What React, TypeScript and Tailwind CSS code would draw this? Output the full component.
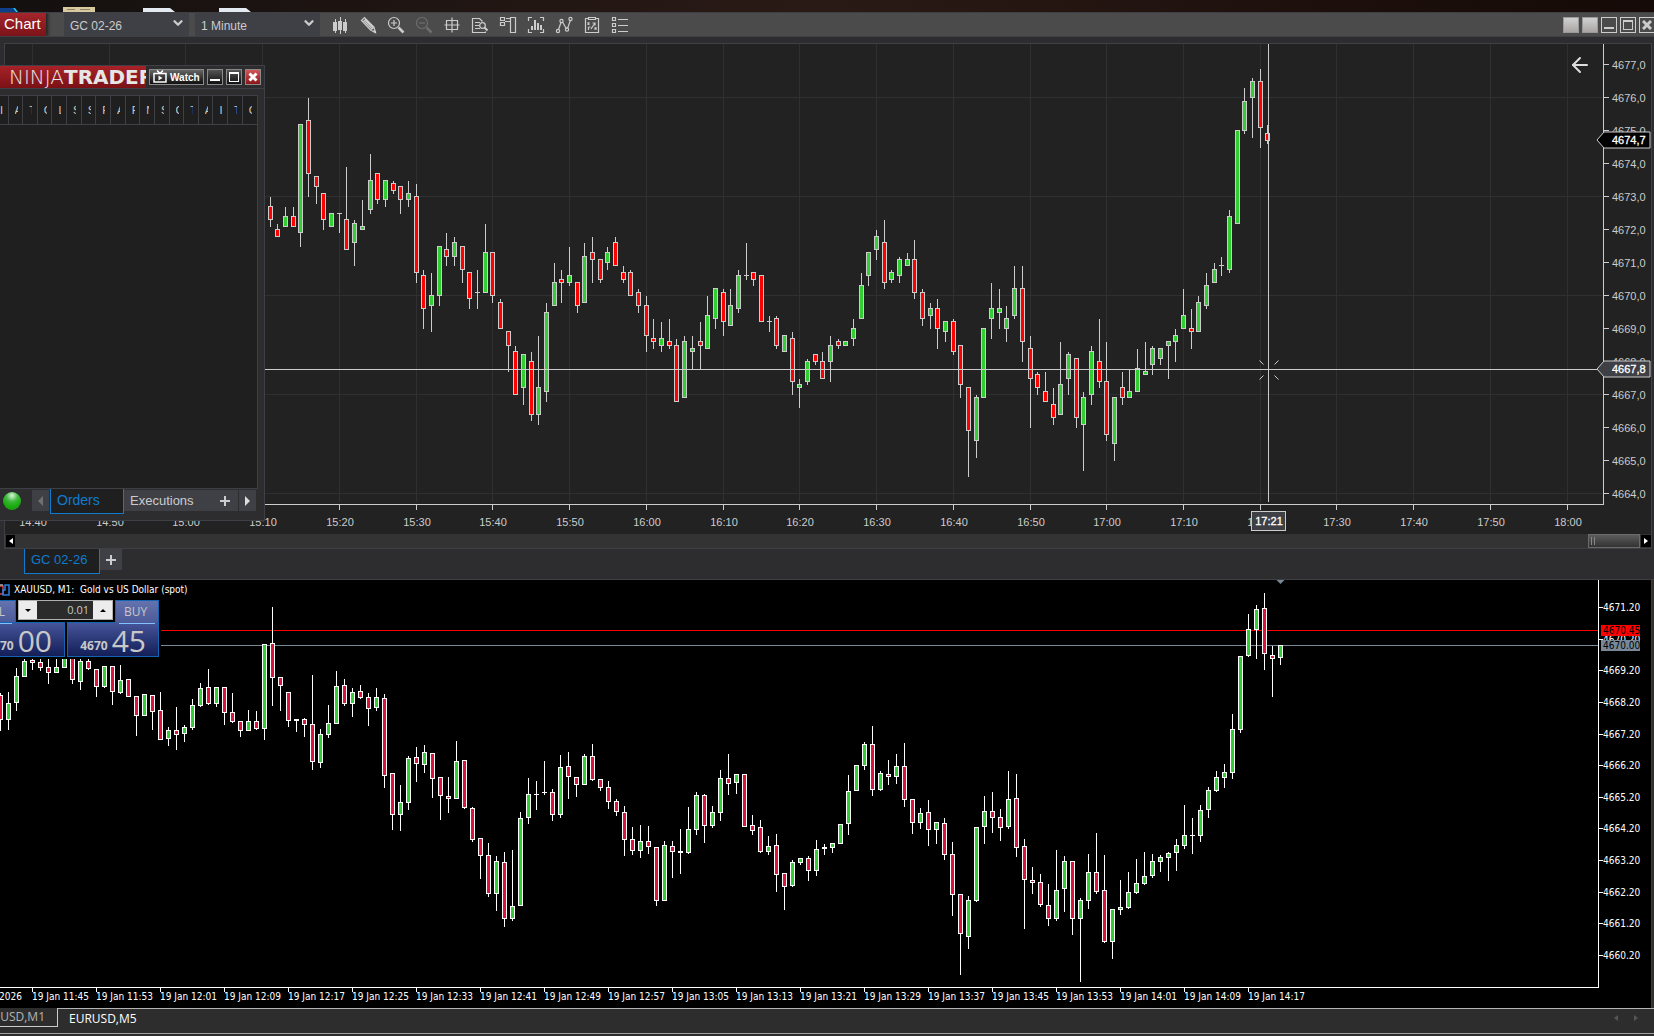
import React from "react";
import { ArrowLeft, ChevronDown } from "lucide-react";

type Tone = "up" | "down" | "flat";
/* x centre, high, body top, body bottom, low; g = rising, r = falling, d = doji */
type Segment = { x: number; y: number; bars: string };

/* Bars are recorded on a grid of thirds of a pixel, relative to the segment origin. */
const GRID = 3;

const FUTURES: Segment[] = [
  {
    x: 255,
    y: 90,
    bars: `46,321,348,390,411,r 67,402,417,441,441,r 91,351,378,411,411,g 115,351,378,411,411,r 136,102,102,429,471,g 160,24,90,252,321,r 184,258,258,291,342,r 205,309,309,390,420,r 229,369,369,411,411,g 253,369,369,372,429,d 274,231,387,480,480,r 298,390,399,459,528,g 322,330,408,420,420,g 346,192,270,360,372,g 367,249,249,330,342,r 391,270,270,330,351,g 415,273,279,303,312,r 436,288,288,330,372,r 460,273,309,330,351,g 484,282,318,549,579,r 505,540,555,657,717,r 529,549,615,648,726,g 553,468,468,618,648,g 574,429,477,501,528,r 598,441,456,501,528,g 622,468,468,540,579,r 643,546,546,627,657,r 667,540,606,609,657,d 691,402,486,609,609,g 712,486,486,618,639,r 736,627,636,717,717,r 760,723,723,768,846,r 781,768,783,915,915,r 805,792,792,894,945,g 829,786,813,975,993,r 850,738,891,975,1005,g 874,639,666,906,936,g 898,519,576,648,648,g 919,540,567,579,639,r 943,471,555,579,588,g 967,576,576,648,669,r 988,459,498,639,639,g 1012,441,486,510,579,r 1036,507,507,570,579,r 1057,471,486,519,540,g 1081,441,456,528,528,r 1105,528,546,570,579,r 1126,540,546,618,618,r 1150,597,606,648,669,r 1174,618,645,738,786,r 1195,687,744,756,777,r 1219,696,744,768,786,g 1243,687,753,768,777,r`,
  },
  {
    x: 655,
    y: 200,
    bars: `64,417,435,606,606,r 88,408,423,594,594,g 112,408,444,456,507,g 136,366,423,438,507,r 157,288,345,447,447,g 181,264,264,357,387,g 205,267,276,366,408,r 226,267,315,378,378,g 250,210,225,327,339,g 274,129,225,228,240,d 295,216,216,240,258,r 319,225,225,366,366,r 343,348,363,366,396,d 364,348,354,438,447,r 388,405,405,456,456,g 412,396,414,546,585,r 433,537,552,564,624,g 457,477,483,546,555,g 481,462,462,486,495,r 502,456,483,537,537,r 526,408,435,486,546,g 550,417,423,438,447,r 571,423,423,438,438,g 595,357,384,417,438,g 619,219,255,357,357,g 640,156,156,228,258,g 664,90,108,150,180,g 688,60,126,249,267,r 709,210,216,240,249,g 733,171,177,228,249,g 757,159,177,198,198,g 778,120,177,279,297,r 802,267,276,357,378,r 826,309,324,348,387,g 847,297,324,387,447,r 871,363,363,396,426,g 895,357,363,456,465,r 916,435,435,555,594,r 940,561,561,693,831,r 964,585,591,723,774,g 985,384,384,594,594,g 1009,249,324,357,417,g 1033,267,324,339,387,g 1054,318,354,387,426,g 1078,198,264,348,357,g 1102,198,264,426,486,r 1126,408,444,537,684,r 1147,516,522,564,585,r 1171,516,573,606,606,r 1195,564,612,654,675,r 1216,426,552,645,645,g 1240,456,462,537,585,g`,
  },
  {
    x: 1040,
    y: 50,
    bars: `109,924,924,1104,1134,r 130,1026,1041,1125,1263,g 154,888,903,1035,1065,g 178,807,933,996,1014,r 199,876,993,1155,1173,r 223,1041,1041,1182,1233,g 247,966,1011,1044,1065,r 268,960,1023,1044,1044,g 292,897,954,1026,1026,g 316,876,963,975,975,g 337,888,894,945,975,g 361,894,894,927,945,g 385,873,873,888,987,g 406,837,855,876,936,g 430,717,795,837,837,g 454,777,834,846,897,r 475,738,756,846,846,g 499,669,705,768,777,g 523,639,657,699,699,g 544,621,645,648,678,d 568,480,498,660,669,g 592,240,240,522,522,g 613,114,153,243,252,g 637,84,93,144,264,g 661,57,93,234,294,r 682,225,249,273,282,r`,
  },
];

const SPOT: Segment[] = [
  {
    x: 0,
    y: 590,
    bars: `1,309,315,390,423,r 25,306,339,390,420,g 49,234,258,339,363,g 73,180,213,261,261,g 97,180,210,219,240,r 121,180,216,234,243,r 145,180,231,249,282,r 169,180,231,249,249,g 193,150,150,234,234,g 217,150,150,270,282,r 241,150,213,276,300,g 265,150,213,237,240,r 289,237,237,291,321,r 313,228,228,291,294,g 337,228,228,306,345,r 361,225,270,309,312,g 385,267,267,321,321,r 409,318,318,378,438,r 433,312,312,378,378,g 457,315,315,366,420,r 481,306,360,450,450,r 505,411,420,447,468,g 529,351,420,435,480,r 553,405,411,432,456,g 577,327,345,414,420,g 601,279,294,348,351,g 625,237,291,342,345,r 649,291,291,342,351,g 673,291,291,369,405,r 697,309,366,396,399,r 721,393,393,423,441,r 745,360,393,423,423,g 769,363,393,417,420,r 793,162,162,417,450,g 817,51,159,264,348,r 841,261,261,288,363,r 865,306,306,393,411,r 889,387,387,393,426,d 913,384,387,405,441,r 937,255,402,516,540,r 961,417,432,519,534,g 985,345,399,435,444,g 1009,243,288,402,402,g 1033,267,285,342,348,r 1057,294,306,342,381,g 1081,285,303,324,327,r 1105,309,321,357,408,r 1129,294,321,354,363,g 1153,312,324,558,594,r 1177,549,549,675,720,r 1201,585,636,675,723,g 1225,498,504,639,660,g 1249,471,501,522,576,r 1273,465,486,525,549,g 1297,489,489,567,624,r 1321,561,561,618,690,r 1345,561,618,627,669,r 1369,453,513,627,627,g 1393,510,510,654,657,r 1417,651,654,750,756,r`,
  },
  {
    x: 480,
    y: 720,
    bars: `1,354,354,408,477,r 25,369,405,522,531,r 49,408,423,522,573,g 73,396,426,597,621,r 97,390,558,597,603,g 121,276,294,558,558,g 145,174,222,294,312,g 169,183,222,225,270,d 193,123,216,219,225,d 217,207,216,285,303,r 241,105,141,285,294,g 265,96,138,171,237,r 289,171,171,195,231,r 313,102,108,195,195,g 337,72,108,180,183,r 361,177,177,204,213,r 385,183,201,246,267,r 409,237,243,276,288,r 433,258,276,360,408,r 457,321,357,393,405,r 481,315,363,393,414,g 505,318,363,381,402,r 529,381,381,543,558,r 553,363,375,543,543,g 577,363,378,396,474,r 601,327,393,399,462,d 625,261,327,399,402,g 649,216,225,330,345,g 673,222,225,318,369,r 697,258,276,318,324,g 721,150,174,279,303,g 745,102,174,192,225,r 769,162,162,189,222,g 793,162,162,321,321,r 817,285,315,333,345,r 841,300,321,396,399,r 865,348,378,396,405,g 889,342,375,465,516,r 913,459,459,501,570,r 937,420,426,498,501,g 961,414,414,429,435,g 985,408,414,453,483,r 1009,360,387,453,468,g 1033,372,381,387,405,d 1057,369,369,384,399,g 1081,312,312,372,372,g 1105,165,213,312,345,g 1129,135,135,213,213,g 1153,66,72,138,150,g 1177,18,72,210,228,r 1201,153,159,210,213,g 1225,120,162,171,195,r 1249,102,138,171,192,g 1273,69,138,240,261,r 1297,237,237,309,342,r 1321,264,279,309,327,g 1345,240,276,330,378,r 1369,306,306,330,372,g`,
  },
  {
    x: 920,
    y: 570,
    bars: `73,744,759,855,870,r 97,816,852,975,1038,r 121,972,972,1092,1215,r 145,978,990,1101,1137,g 169,771,771,993,996,g 193,678,723,771,822,g 217,666,723,744,789,r 241,717,741,774,813,r 265,603,687,771,777,g 289,612,684,834,861,r 313,807,828,930,1077,r 337,891,930,939,972,r 361,912,936,1005,1011,r 385,942,1005,1047,1068,r 409,840,960,1047,1053,g 433,858,873,957,1026,g 457,873,873,1047,1095,r 481,984,990,1047,1236,g 505,852,906,993,1017,g 529,789,906,966,972,r 553,855,960,1116,1119,r 577,1017,1017,1116,1167,g 601,930,1011,1020,1035,g 625,906,966,1014,1017,g 649,867,939,969,972,g 673,846,918,942,945,g 697,852,873,918,924,g 721,855,861,876,906,g 745,846,849,864,933,g 769,807,825,849,903,g 793,705,795,828,837,g 817,744,795,798,852,d 841,705,720,798,816,g 865,651,660,720,744,g 889,603,621,663,666,g 913,582,606,624,654,g 937,432,477,609,627,g 961,258,258,480,489,g 985,132,177,258,261,g 1009,105,117,180,267,g 1033,69,114,252,300,r 1057,228,255,267,381,r 1081,225,225,264,285,g`,
  },
];

type Bar = { x: number; high: number; top: number; bottom: number; low: number; tone: Tone };

const TONES: Record<string, Tone> = { g: "up", r: "down", d: "flat" };

function parse(segments: Segment[]): Bar[] {
  return segments.flatMap((s) =>
    s.bars.split(" ").map((item) => {
      const p = item.split(",");
      const y = (v: string) => s.y + Math.round(Number(v) / GRID);
      return {
        x: s.x + Math.floor(Number(p[0]) / GRID),
        high: y(p[1]),
        top: y(p[2]),
        bottom: y(p[3]),
        low: y(p[4]),
        tone: TONES[p[5]],
      };
    })
  );
}

const futuresBars = parse(FUTURES);
const spotBars = parse(SPOT);

function Candles({ bars, outline, up, down }: { bars: Bar[]; outline: string; up: string; down: string }) {
  return (
    <g shapeRendering="crispEdges">
      {bars.map((b) => (
        <g key={b.x}>
          <rect x={b.x} y={b.high} width={1} height={Math.max(1, b.low - b.high)} fill={outline} />
          <rect x={b.x - 2} y={b.top} width={5} height={b.bottom - b.top} fill={outline} />
          {b.tone !== "flat" && (
            <rect
              x={b.x - 1}
              y={b.top + 1}
              width={3}
              height={Math.max(1, b.bottom - b.top - 2)}
              fill={b.tone === "up" ? up : down}
            />
          )}
        </g>
      ))}
    </g>
  );
}

/* ---------- toolbar ---------- */

const toolIcons: { name: string; dim?: boolean; art: React.ReactNode }[] = [
  {
    name: "Chart style",
    art: (
      <g fill="currentColor" stroke="none">
        <path d="M2 6h4v9H2zM4 3h1v14H4zM7 5h4v9H7zM9 1h1v17H9zM12 6h4v9h-4zM14 3h1v14h-1z" />
      </g>
    ),
  },
  {
    name: "Drawing tools",
    art: (
      <>
        <path d="M2.500 4.500l3-3 9.500 9.500 1.500 5.500-5-2.500zM4 6l3-3M12 14l3-3M5 5l8 8" />
        <path d="M6 3.500l8 8M14.500 14.500l2 2" strokeWidth={2} />
      </>
    ),
  },
  {
    name: "Zoom in",
    art: (
      <>
        <circle cx={7} cy={7} r={5.500} />
        <path d="M4 7h6M7 4v6" />
        <path d="M11.500 11.500l5 5" strokeWidth={2.500} />
      </>
    ),
  },
  {
    name: "Zoom out",
    dim: true,
    art: (
      <>
        <circle cx={7} cy={7} r={5.500} />
        <path d="M4 7h6" />
        <path d="M11.500 11.500l5 5" strokeWidth={2.500} />
      </>
    ),
  },
  {
    name: "Crosshair",
    art: <path d="M3.500 4.500h11v9h-11zM9 1.500v15M1.500 9h15" />,
  },
  {
    name: "Data box",
    art: (
      <>
        <path d="M14.500 15.500v1h-13v-14h7l3 3M4 6.500h5M4 9.500h4M4 12.500h5" />
        <circle cx={11.500} cy={9.500} r={2.800} />
        <path d="M13.500 11.500l3 3" strokeWidth={2} />
      </>
    ),
  },
  {
    name: "Chart trader",
    art: <path d="M11.500 1.500h5v15h-5zM11 5.500H6M1.500 1.500h4v3h-4zM1.500 6.500h4v3h-4zM7 2.500h4" />,
  },
  {
    name: "Data series",
    art: (
      <>
        <path d="M1.500 5v-3.500H5M13 1.500h3.500V5M16.500 13v3.500H13M5 16.500H1.500V13" />
        <path d="M5 14v-4M8 14V4M11 14V7M14 14V9" strokeWidth={2} />
      </>
    ),
  },
  {
    name: "Indicators",
    art: (
      <>
        <path d="M3.500 13.500L6 6.500M7.500 6l4 7M12.500 12.500l3-8.500" />
        <circle cx={3} cy={15} r={1.600} />
        <circle cx={6.500} cy={5} r={1.600} />
        <circle cx={12} cy={13.500} r={1.600} />
        <circle cx={15.500} cy={3} r={1.600} />
      </>
    ),
  },
  {
    name: "Strategies",
    art: (
      <>
        <path d="M5 2.500H2.500v14h13v-14H13M5.500 1.500h7v2h-7z" />
        <path d="M4.500 6.500l2 2m0-2l-2 2M11.500 11.500l2 2m0-2l-2 2M5.500 11v3m0-3h2M8 13l4-6m-2.500 0H12v2.500" />
      </>
    ),
  },
  {
    name: "Properties",
    art: <path d="M1.500 1.500h3v3h-3zM1.500 7.500h3v3h-3zM1.500 13.500h3v3h-3zM7 3.500h10M7 9.500h10M7 15.500h10" />,
  },
];

function ToolbarSelect({ label, value }: { label: string; value: string }) {
  return (
    <div className="relative w-[125px] bg-[#3f3f46]">
      <select
        aria-label={label}
        className="h-[19px] w-full appearance-none bg-transparent pl-[6px] text-[12px] leading-[19px] text-[#cccccc] outline-none"
      >
        <option>{value}</option>
      </select>
      <ChevronDown className="pointer-events-none absolute right-1 top-[3px] size-[14px] text-[#cccccc]" strokeWidth={4} />
    </div>
  );
}

function Toolbar() {
  return (
    <header className="flex h-[25px] items-center overflow-hidden border-y border-[#3f3f46] bg-[#4b4b4b]">
      <h1 className="flex h-full w-[46px] items-center bg-gradient-to-b from-[#a5252b] to-[#7c1318] pl-1 text-[15px] text-white shadow-[2px_0_3px_#222]">
        Chart
      </h1>
      <div className="ml-[18px] flex gap-[6px]">
        <ToolbarSelect label="Instrument" value="GC 02-26" />
        <ToolbarSelect label="Interval" value="1 Minute" />
      </div>
      <nav className="ml-[6px] flex">
        {toolIcons.map((t) => (
          <button key={t.name} aria-label={t.name} className="flex w-7 justify-center">
            <svg
              viewBox="0 0 18 18"
              className={t.dim ? "size-[18px] text-[#6e6e6e]" : "size-[18px] text-[#cccccc]"}
              fill="none"
              stroke="currentColor"
              strokeWidth={1.200}
            >
              {t.art}
            </svg>
          </button>
        ))}
      </nav>
      <div className="ml-auto flex gap-[3px]">
        <button aria-label="Instrument link" className="size-4 border border-[#999] bg-gradient-to-b from-[#d0d0d0] to-[#aaa5a5]" />
        <button aria-label="Interval link" className="size-4 border border-[#999] bg-gradient-to-b from-[#d0d0d0] to-[#aaa5a5]" />
        <button aria-label="Minimize" className="flex size-4 items-end justify-center border border-[#cccccc] pb-[3px]">
          <span className="h-[2px] w-[10px] bg-[#cccccc]" />
        </button>
        <button aria-label="Maximize" className="flex size-4 items-center justify-center border border-[#cccccc]">
          <span className="size-[10px] border border-t-2 border-[#cccccc]" />
        </button>
        <button aria-label="Close" className="flex h-4 w-[15px] items-center justify-center border border-r-0 border-[#cccccc]">
          <svg viewBox="0 0 10 10" className="size-[10px]" stroke="#cccccc" strokeWidth={3}>
            <path d="M1 1l8 8M9 1L1 9" />
          </svg>
        </button>
      </div>
    </header>
  );
}

/* ---------- futures chart ---------- */

const GRID_X = [32, 109, 185, 262, 339, 416, 492, 569, 646, 723, 799, 876, 953, 1030, 1106, 1183, 1260, 1336, 1413, 1490, 1567];
const GRID_Y = [97, 196, 295, 394, 493];

function timeAt(index: number) {
  const minutes = 14 * 60 + 40 + index * 10;
  return `${Math.floor(minutes / 60)}:${String(minutes % 60).padStart(2, "0")}`;
}

function PriceTag({ y, text, fill }: { y: number; text: string; fill: string }) {
  return (
    <g>
      <path d={`M1597 ${y}l7-8h46v16h-46z`} fill={fill} stroke="#cccccc" />
      <text x={1612} y={y + 4} fill="#ffffff" stroke="#ffffff" strokeWidth={0.300}>
        {text}
      </text>
    </g>
  );
}

function FuturesChart() {
  return (
    <section aria-label="GC 02-26 one minute chart" className="mr-[2px] ml-1 border border-[#3f3f46] bg-[#222222]">
      <div className="flex h-[490px] text-[11px]">
        <div className="relative min-w-0 flex-1">
          <svg className="h-full w-full">
            <g transform="translate(-5 -44)">
              <g shapeRendering="crispEdges">
                {GRID_X.map((x) => (
                  <rect key={x} x={x} y={44} width={1} height={458} fill="#303032" />
                ))}
                {GRID_Y.map((y) => (
                  <rect key={y} x={5} y={y} width={1597} height={1} fill="#303032" />
                ))}
                <rect x={5} y={504} width={1599} height={1} fill="#cccccc" />
                {GRID_X.map((x) => (
                  <rect key={x} x={x} y={505} width={1} height={5} fill="#cccccc" />
                ))}
              </g>
              <Candles bars={futuresBars} outline="#cccccc" up="#32cd32" down="#ff0000" />
              <g fill="#cccccc" shapeRendering="crispEdges">
                <rect x={5} y={369} width={1592} height={1} />
                <rect x={1268} y={44} width={1} height={458} />
              </g>
              <path
                d="M1259.500 360.500l4 4M1278.500 360.500l-4 4M1259.500 379.500l4-4M1278.500 379.500l-4-4"
                stroke="#cccccc"
              />
              <g fill="#cccccc" textAnchor="middle">
                {GRID_X.map((x, i) => (
                  <text key={x} x={x + 1} y={526}>
                    {timeAt(i)}
                  </text>
                ))}
              </g>
              <rect x={1251.500} y={511.500} width={34} height={19} fill="#3f3f46" stroke="#cccccc" />
              <text x={1269} y={525} textAnchor="middle" fill="#ffffff" stroke="#ffffff" strokeWidth={0.300}>
                17:21
              </text>
            </g>
          </svg>
          <button aria-label="Scroll to last bar" className="absolute right-[11px] top-[9px] text-[#dddddd]">
            <ArrowLeft className="size-6" strokeWidth={2} />
          </button>
        </div>
        <svg className="h-full w-12 shrink-0 overflow-visible">
          <g transform="translate(-1603 -44)">
            <rect x={1603} y={44} width={1} height={461} fill="#cccccc" />
            {Array.from({ length: 14 }, (_, i) => (
              <g key={i} fill="#cccccc">
                <rect x={1604} y={64 + i * 33} width={5} height={1} />
                <text x={1612} y={69 + i * 33}>
                  {`${4677 - i},0`}
                </text>
              </g>
            ))}
            <PriceTag y={140} text="4674,7" fill="#000000" />
            <PriceTag y={369} text="4667,8" fill="#3f3f46" />
          </g>
        </svg>
      </div>
      <div className="flex h-[14px] items-center bg-[#333333]">
        <button aria-label="Scroll left" className="ml-px flex h-3 w-[9px] items-center justify-center bg-black">
          <svg viewBox="0 0 4 6" className="h-[6px] w-1" fill="#ffffff">
            <path d="M4 0v6L0 3z" />
          </svg>
        </button>
        <div className="ml-auto mr-px flex h-[14px] w-[52px] items-center gap-[2px] border border-[#6a6a6a] bg-gradient-to-b from-[#5c5c5c] to-[#333333] pl-[2px]">
          <span className="h-2 w-px bg-[#888]" />
          <span className="h-2 w-px bg-[#888]" />
        </div>
        <button aria-label="Scroll right" className="flex h-3 w-[10px] items-center justify-center bg-black">
          <svg viewBox="0 0 4 6" className="h-[6px] w-1" fill="#ffffff">
            <path d="M0 0v6l4-3z" />
          </svg>
        </button>
      </div>
    </section>
  );
}

/* ---------- control center window ---------- */

const COLUMNS = ["I", "A", "T", "C", "L", "S", "S", "F", "A", "F", "N", "S", "C", "T", "A", "I", "T", "C"];

function ControlCenter() {
  return (
    <aside className="absolute left-0 top-[65px] flex h-[456px] w-[265px] flex-col border-y border-r border-[#3f3f46] bg-[#2d2d30]">
      <div className="flex h-[23px] items-center border-b border-[#3f3f46]">
        <div className="flex h-full w-[146px] items-center overflow-hidden whitespace-nowrap bg-gradient-to-b from-[#a82228] to-[#7a1116] font-['DejaVu_Sans'] text-[20px] leading-[22px] text-[#e6e6e6]">
          <span className="-ml-1 w-[68px] shrink-0 text-right font-extralight">NINJA</span>
          <span className="font-bold">TRADER</span>
        </div>
        <div className="ml-auto flex gap-[3px] pr-[3px]">
          <button className="flex h-4 w-[55px] items-center gap-[3px] border border-[#8a8a8a] bg-gradient-to-b from-[#666] to-[#111] pl-[3px] text-[10px] font-bold text-white">
            <svg viewBox="0 0 14 14" className="size-[14px]" fill="none" stroke="#ffffff" strokeWidth={1.500}>
              <path d="M1 3.500h12v8.500H1zM4 .5l3 3 3-3" />
              <path d="M5.500 5.500v5l4-2.500z" fill="#ffffff" stroke="none" />
            </svg>
            Watch
          </button>
          <button aria-label="Minimize" className="flex size-4 items-end justify-center border border-[#8a8a8a] bg-gradient-to-b from-[#555] to-[#111] pb-[3px]">
            <span className="h-[2px] w-[10px] bg-white" />
          </button>
          <button aria-label="Maximize" className="flex size-4 items-center justify-center border border-[#8a8a8a] bg-gradient-to-b from-[#555] to-[#111]">
            <span className="size-[10px] border border-t-2 border-white" />
          </button>
          <button aria-label="Close" className="flex size-4 items-center justify-center border border-[#8a8a8a] bg-gradient-to-b from-[#d2555a] to-[#8c1318]">
            <svg viewBox="0 0 10 10" className="size-[10px]" stroke="#ffffff" strokeWidth={3}>
              <path d="M1.500 1.500l7 7M8.500 1.500l-7 7" />
            </svg>
          </button>
        </div>
      </div>
      <div className="mr-[6px] mt-[6px] flex-1 border-y border-r border-[#3f3f46] bg-[#1f1f1f]">
        <table className="w-full table-fixed border-collapse">
          <thead>
            <tr className="h-[28px] border-b border-[#3f3f46]">
              {COLUMNS.map((c, i) => (
                <th
                  key={i}
                  className="border-r border-[#3f3f46] p-0 text-[11px] font-normal text-[#cccccc] first:w-2 last:border-r-0"
                >
                  <span className={i === 0 ? "block w-[3px] overflow-hidden" : "ml-[6px] block w-[3px] overflow-hidden"}>{c}</span>
                </th>
              ))}
            </tr>
          </thead>
        </table>
      </div>
      <div className="flex h-[31px] items-start text-[13px] text-[#cccccc]">
        <span className="ml-[3px] mt-[3px] size-[18px] rounded-full bg-[radial-gradient(circle_at_50%_20%,#d8f5d8_0%,#3fb93f_35%,#1fae12_60%,#159010_100%)]" />
        <button aria-label="Previous tab" className="ml-[11px] mt-px flex h-[21px] w-[17px] items-center justify-center bg-[#3f3f46]">
          <svg viewBox="0 0 5 10" className="h-[10px] w-[5px]" fill="#707070">
            <path d="M5 0v10L0 5z" />
          </svg>
        </button>
        <button className="ml-px h-[25px] w-[74px] border border-t-0 border-[#0f7bcf] bg-[#1f1f1f] pb-px pl-[6px] text-left text-[14px] text-[#0f7bcf]">
          Orders
        </button>
        <button className="mt-px h-[21px] w-[88px] bg-[#3f3f46] pl-[6px] text-left">Executions</button>
        <button aria-label="Add tab" className="mt-px flex h-[21px] w-[26px] items-center justify-center bg-[#3f3f46]">
          <Plus />
        </button>
        <button aria-label="Next tab" className="ml-px mt-px flex h-[21px] w-[17px] items-center justify-center bg-[#3f3f46]">
          <svg viewBox="0 0 5 10" className="h-[10px] w-[5px]" fill="#dddddd">
            <path d="M0 0v10l5-5z" />
          </svg>
        </button>
      </div>
    </aside>
  );
}

function Plus() {
  return (
    <svg viewBox="0 0 10 10" className="size-[10px]" fill="#cccccc">
      <path d="M4 0h2v4h4v2H6v4H4V6H0V4h4z" />
    </svg>
  );
}

/* ---------- spot chart ---------- */

const DATES = [
  "19 Jan 2026", "19 Jan 11:45", "19 Jan 11:53", "19 Jan 12:01", "19 Jan 12:09", "19 Jan 12:17", "19 Jan 12:25",
  "19 Jan 12:33", "19 Jan 12:41", "19 Jan 12:49", "19 Jan 12:57", "19 Jan 13:05", "19 Jan 13:13", "19 Jan 13:21",
  "19 Jan 13:29", "19 Jan 13:37", "19 Jan 13:45", "19 Jan 13:53", "19 Jan 14:01", "19 Jan 14:09", "19 Jan 14:17",
];
const SPOT_PRICES = ["4671.20", "4670.20", "4669.20", "4668.20", "4667.20", "4666.20", "4665.20", "4664.20", "4663.20", "4662.20", "4661.20", "4660.20"];

function spotPriceY(i: number) {
  return 607 + Math.round((i * 348) / 11);
}

function TradePanel() {
  return (
    <div className="absolute left-0 top-[20px] flex items-start gap-[2px] bg-black pb-[2px] pr-[2px] font-['Open_Sans',sans-serif] text-[#c8c8c8]">
      <div className="w-[65px]">
        <button className="relative z-10 block h-[22px] w-4 overflow-hidden border-r border-t border-[#1464b4] bg-gradient-to-b from-[#6472ad] to-[#4d5b9a] text-[12px]">
          <span className="float-right mr-[10px]">SELL</span>
        </button>
        <div className="relative flex h-[35px] items-end justify-end overflow-hidden border-y border-r border-[#1464b4] bg-gradient-to-b from-[#46549a] to-[#141f58] pr-3">
          <span className="absolute left-0 top-0 h-px w-3 bg-[#82c0ff]" />
          <span className="mr-1 pb-[2px] text-[12px] font-bold leading-4">4670</span>
          <span className="text-[30px] leading-[30px]">00</span>
        </div>
      </div>
      <div className="absolute left-[18px] top-0 flex h-5 w-[95px] border border-[#b0b0b0] bg-[#2b2b2b]">
        <button aria-label="Decrease volume" className="flex w-[18px] items-center justify-center bg-[#ececec]">
          <svg viewBox="0 0 6 3" className="h-[3px] w-[6px]">
            <path d="M0 0h6L3 3z" />
          </svg>
        </button>
        <input aria-label="Volume" defaultValue="0.01" className="min-w-0 flex-1 bg-transparent pr-1 text-right text-[11px] leading-[18px] text-[#c8c8c8] outline-none" />
        <button aria-label="Increase volume" className="flex w-[19px] items-center justify-center bg-[#ececec]">
          <svg viewBox="0 0 6 3" className="h-[3px] w-[6px]">
            <path d="M0 3h6L3 0z" />
          </svg>
        </button>
      </div>
      <div className="w-[92px]">
        <button className="ml-auto block h-[22px] w-[44px] border-x border-t border-[#1464b4] bg-gradient-to-b from-[#6472ad] to-[#4d5b9a] pr-[3px] text-[12px]">
          BUY
        </button>
        <div className="relative flex h-[35px] items-end justify-end border border-[#1464b4] bg-gradient-to-b from-[#46549a] to-[#141f58] pr-3">
          <span className="absolute -top-px right-0 h-px w-[42px] bg-[#4d5b9a]" />
          <span className="absolute right-[3px] top-0 h-px w-9 bg-[#82c0ff]" />
          <span className="mr-1 pb-[2px] text-[12px] font-bold leading-4">4670</span>
          <span className="text-[30px] leading-[30px]">45</span>
        </div>
      </div>
    </div>
  );
}

function SpotChart() {
  return (
    <section
      aria-label="XAUUSD one minute chart"
      className="relative mr-[2px] flex h-[428px] border-r border-[#3a3a3a] bg-black font-['DejaVu_Sans_Condensed','DejaVu_Sans',sans-serif] text-[10px]"
    >
      <svg className="h-full min-w-0 flex-1">
        <g transform="translate(0 -580)">
          <g shapeRendering="crispEdges">
            <rect x={0} y={630} width="100%" height={1} fill="#ff0000" />
            <rect x={0} y={645} width="100%" height={1} fill="#778899" />
            <rect x={0} y={987} width="100%" height={1} fill="#ffffff" />
          </g>
          <Candles bars={spotBars} outline="#ffffff" up="#32cd32" down="#dc143c" />
          <path d="M1276.500 580h8l-4 4z" fill="#778899" />
          {DATES.map((d, i) => (
            <g key={d} fill="#ffffff">
              <rect x={i * 64 - 32} y={988} width={1} height={4} />
              <text x={i * 64 - 32} y={1000}>
                {d}
              </text>
            </g>
          ))}
        </g>
      </svg>
      <svg className="h-full w-[53px] shrink-0">
        <g transform="translate(-1598 -580)">
          <rect x={1598} y={580} width={1} height={408} fill="#ffffff" />
          {SPOT_PRICES.map((p, i) => (
            <g key={p} fill="#ffffff">
              <rect x={1599} y={spotPriceY(i)} width={4} height={1} />
              <text x={1603} y={spotPriceY(i) + 4}>
                {p}
              </text>
            </g>
          ))}
          <rect x={1601} y={625} width={39} height={11} fill="#ff0000" />
          <text x={1603} y={634}>
            4670.45
          </text>
          <rect x={1601} y={640} width={39} height={11} fill="#778899" />
          <text x={1603} y={649}>
            4670.00
          </text>
        </g>
      </svg>
      <div className="absolute left-0 top-[3px] flex items-center leading-[14px] text-white">
        <svg viewBox="0 0 10 12" className="mr-1 h-3 w-[10px]" fill="none" strokeWidth={1.500}>
          <path d="M0 2h3v8H0" stroke="#e04040" />
          <path d="M0 1h3" stroke="#aaaaaa" />
          <path d="M3 11V6h2V1h4v10z" stroke="#2a7de1" />
        </svg>
        <span className="whitespace-pre">XAUUSD, M1:  Gold vs US Dollar (spot)</span>
      </div>
      <TradePanel />
    </section>
  );
}

function ChartTabs() {
  return (
    <footer className="flex min-h-[28px] flex-1 flex-col bg-[#2d2d2d] font-['Open_Sans',sans-serif] text-[12px]">
      <div className="flex h-[26px] items-start border-b border-[#a0a0a0]">
        <button className="flex h-[19px] w-[58px] items-center justify-end overflow-hidden border-b border-r border-[#cccccc] pr-3 text-[#b4b4b4]">
          XAUUSD,M1
        </button>
        <div className="flex h-full flex-1 items-start border-t border-[#b4b4b4]">
          <button className="pl-[11px] leading-5 text-white">EURUSD,M5</button>
          <div className="ml-auto mr-4 mt-[6px] flex gap-4">
            <button aria-label="Scroll tabs left">
              <svg viewBox="0 0 4 6" className="h-[6px] w-1" fill="#555">
                <path d="M4 0v6L0 3z" />
              </svg>
            </button>
            <button aria-label="Scroll tabs right">
              <svg viewBox="0 0 4 6" className="h-[6px] w-1" fill="#555">
                <path d="M0 0v6l4-3z" />
              </svg>
            </button>
          </div>
        </div>
      </div>
    </footer>
  );
}

export default function App() {
  return (
    <div className="flex min-h-screen flex-col overflow-hidden bg-[#33302d] font-['Liberation_Sans',Arial,sans-serif]">
      <div className="flex h-3 items-end bg-gradient-to-r from-[#14100f] via-[#2a1a15] to-[#150a07]">
        <svg className="h-[5px] w-[256px]">
          <path d="M0 1h13l3 4H0z" fill="#0d3f8a" />
          <path d="M13 1l3 4h2l-3-4z" fill="#2ec4f0" />
          <path d="M63 0h32v5H63z" fill="#d8c9a0" />
          <path d="M67 2h8v1h-8zM80 2h10v1H80z" fill="#8f8266" />
          <path d="M143 1h27l5 4h-32zM219 1h27l5 4h-32z" fill="#e4eaf2" />
        </svg>
      </div>
      <main className="relative -mt-3 bg-[#2d2d30] bg-clip-content pt-3">
        <Toolbar />
        <div className="pt-[6px]">
          <FuturesChart />
        </div>
        <div className="flex h-[31px] items-start border-b border-[#3f3f46] pl-6">
          <button className="h-[25px] w-[76px] border border-t-0 border-[#0f7bcf] bg-[#1f1f1f] pb-[2px] pl-[6px] text-left text-[13px] text-[#0f7bcf]">
            GC 02-26
          </button>
          <button aria-label="New tab" className="flex h-[21px] w-[22px] items-center justify-center bg-[#3f3f46]">
            <Plus />
          </button>
        </div>
        <ControlCenter />
      </main>
      <SpotChart />
      <ChartTabs />
    </div>
  );
}
